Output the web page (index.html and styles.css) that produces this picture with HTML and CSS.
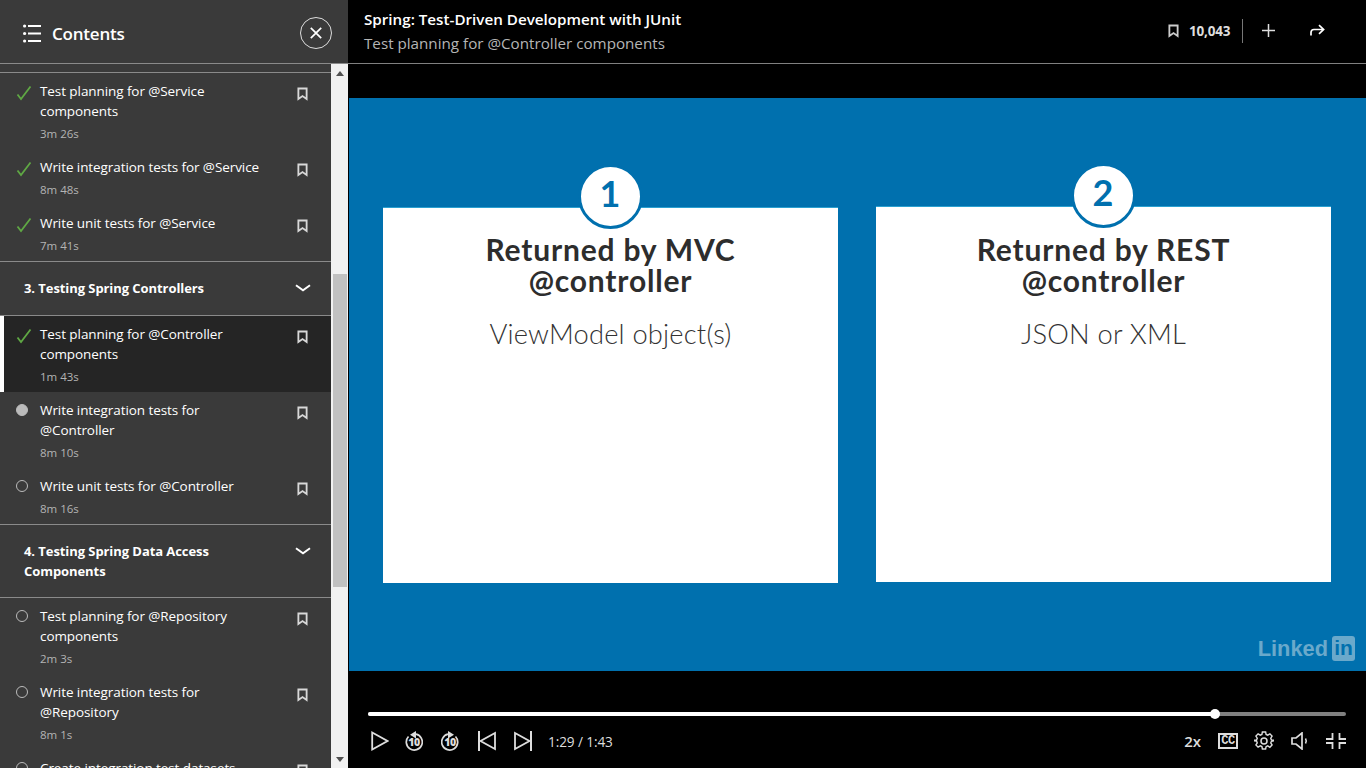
FILE: index.html
```html
<!DOCTYPE html>
<html lang="en">
<head>
<meta charset="utf-8">
<title>Spring: Test-Driven Development with JUnit</title>
<link rel="stylesheet" href="styles.css">
</head>
<body>
<svg class="defs" width="0" height="0" aria-hidden="true">
  <symbol id="bm" viewBox="0 0 12 14"><path d="M1.500 1h9v11.500L6 9.200 1.500 12.500z" fill="none" stroke="currentColor" stroke-width="2"/></symbol>
  <symbol id="chk" viewBox="0 0 16 16"><path d="M1.500 9.500 5 14 14.500 1.500" fill="none" stroke="#5fa844" stroke-width="1.800"/></symbol>
  <symbol id="skip" viewBox="0 0 18 20"><path d="M11 3.200A8 8 0 1 1 3.500 5.500" fill="none" stroke="#ddd" stroke-width="1.700"/><path d="M11 0v7.500L5 3.700z" fill="#ddd"/></symbol>
</svg>
<div class="app">
  <aside class="side">
    <header class="side-head">
      <svg class="list-ic" width="18" height="19" viewBox="0 0 18 19"><g fill="#fff"><circle cx="1.600" cy="2" r="1.600"/><circle cx="1.600" cy="9.500" r="1.600"/><circle cx="1.600" cy="17" r="1.600"/><rect x="5" y="1" width="13" height="2"/><rect x="5" y="8.500" width="13" height="2"/><rect x="5" y="16" width="13" height="2"/></g></svg>
      <span class="side-title">Contents</span>
      <button class="close"><svg width="12" height="12" viewBox="0 0 12 12"><path d="M.8.8l10.400 10.400M11.200.8.8 11.200" stroke="#fff" stroke-width="1.700" fill="none"/></svg></button>
    </header>
    <div class="side-body">
      <div class="toc">
        <div class="stub"></div>
        <div class="row"><svg class="st"><use href="#chk"/></svg><div class="txt"><p class="name">Test planning for @Service components</p><p class="time">3m 26s</p></div><svg class="bm"><use href="#bm"/></svg></div>
        <div class="row"><svg class="st"><use href="#chk"/></svg><div class="txt"><p class="name">Write integration tests for @Service</p><p class="time">8m 48s</p></div><svg class="bm"><use href="#bm"/></svg></div>
        <div class="row last"><svg class="st"><use href="#chk"/></svg><div class="txt"><p class="name">Write unit tests for @Service</p><p class="time">7m 41s</p></div><svg class="bm"><use href="#bm"/></svg></div>
        <div class="sec"><span class="sec-name">3. Testing Spring Controllers</span><svg class="chev" width="16" height="8" viewBox="0 0 16 8"><path d="M1 1.200 8 6.200l7-5" fill="none" stroke="#fff" stroke-width="2"/></svg></div>
        <div class="row active"><svg class="st"><use href="#chk"/></svg><div class="txt"><p class="name">Test planning for @Controller components</p><p class="time">1m 43s</p></div><svg class="bm"><use href="#bm"/></svg></div>
        <div class="row"><span class="dot filled"></span><div class="txt"><p class="name">Write integration tests for @Controller</p><p class="time">8m 10s</p></div><svg class="bm"><use href="#bm"/></svg></div>
        <div class="row last"><span class="dot"></span><div class="txt"><p class="name">Write unit tests for @Controller</p><p class="time">8m 16s</p></div><svg class="bm"><use href="#bm"/></svg></div>
        <div class="sec"><span class="sec-name">4. Testing Spring Data Access Components</span><svg class="chev" width="16" height="8" viewBox="0 0 16 8"><path d="M1 1.200 8 6.200l7-5" fill="none" stroke="#fff" stroke-width="2"/></svg></div>
        <div class="row"><span class="dot"></span><div class="txt"><p class="name">Test planning for @Repository components</p><p class="time">2m 3s</p></div><svg class="bm"><use href="#bm"/></svg></div>
        <div class="row"><span class="dot"></span><div class="txt"><p class="name">Write integration tests for @Repository</p><p class="time">8m 1s</p></div><svg class="bm"><use href="#bm"/></svg></div>
        <div class="row"><span class="dot"></span><div class="txt"><p class="name">Create integration test datasets</p><p class="time">6m 2s</p></div><svg class="bm"><use href="#bm"/></svg></div>
      </div>
      <div class="sbar">
        <span class="arrow up"></span>
        <span class="sb-top"></span>
        <span class="thumb"></span>
        <span class="sb-bot"></span>
        <span class="arrow down"></span>
      </div>
    </div>
  </aside>
  <main class="main">
    <header class="top">
      <div class="titles">
        <div class="t1">Spring: Test-Driven Development with JUnit</div>
        <div class="t2">Test planning for @Controller components</div>
      </div>
      <div class="actions">
        <svg class="bm-top"><use href="#bm"/></svg>
        <span class="count">10,043</span>
        <span class="vr"></span>
        <svg class="plus" width="13" height="13" viewBox="0 0 13 13"><path d="M6.500 0v13M0 6.500h13" stroke="#ddd" stroke-width="1.500"/></svg>
        <svg class="share" width="15" height="12" viewBox="0 0 15 12"><path d="M1 11.500V8.500Q1 5.500 4 5.500H13M9 1.200l4.600 4.300L9 9.800" fill="none" stroke="#fff" stroke-width="1.700"/></svg>
      </div>
    </header>
    <section class="stage">
      <div class="slide">
        <div class="card">
          <span class="badge">1</span>
          <h2>Returned by MVC<br>@controller</h2>
          <p>ViewModel object(s)</p>
        </div>
        <div class="card second">
          <span class="badge">2</span>
          <h2>Returned by REST<br>@controller</h2>
          <p>JSON or XML</p>
        </div>
        <div class="li-logo"><span class="li-word">Linked</span><span class="li-box">in</span></div>
      </div>
    </section>
    <section class="player">
      <div class="track"><span class="played"></span><span class="knob"></span></div>
      <div class="ctrls">
        <svg class="ic play" width="18" height="20" viewBox="0 0 18 20"><path d="M1.200 1.500 16.500 10 1.200 18.500z" fill="none" stroke="#ddd" stroke-width="1.800"/></svg>
        <span class="rw back"><svg width="18" height="20"><use href="#skip"/></svg><b>10</b></span>
        <span class="rw fwd"><svg class="flip" width="18" height="20"><use href="#skip"/></svg><b>10</b></span>
        <svg class="ic prev" width="18" height="20" viewBox="0 0 18 20"><path d="M1 0v20" stroke="#ddd" stroke-width="2"/><path d="M17 2 2.500 10 17 18z" fill="none" stroke="#ddd" stroke-width="1.800"/></svg>
        <svg class="ic next" width="18" height="20" viewBox="0 0 18 20"><path d="M17 0v20" stroke="#ddd" stroke-width="2"/><path d="M1 2l14.500 8L1 18z" fill="none" stroke="#ddd" stroke-width="1.800"/></svg>
        <span class="clock">1:29 / 1:43</span>
        <span class="grow"></span>
        <span class="speed">2x</span>
        <span class="cc">CC</span>
        <svg class="gear" width="20" height="20" viewBox="0 0 20 20"><path d="M8.300 1h3.400l.5 2.600 1.700.8 2.300-1.400 2.300 2.400-1.400 2.200.7 1.700 2.600.5v.4l-2.600.6-.7 1.800 1.400 2.100-2.300 2.400-2.300-1.400-1.700.8-.5 2.400H8.300l-.5-2.500-1.700-.7L3.800 17 1.500 14.600l1.400-2.100-.7-1.800-2.600-.5v-.4l2.600-.5.7-1.700L1.500 5.400l2.300-2.400 2.300 1.400 1.700-.8z" fill="none" stroke="#ddd" stroke-width="1.500" transform="translate(.5 0) scale(.95)"/><circle cx="10" cy="10" r="3" fill="none" stroke="#ddd" stroke-width="1.500"/></svg>
        <svg class="vol" width="18" height="18" viewBox="0 0 18 18"><path d="M1 6h4l6-5v16l-6-5H1z" fill="none" stroke="#ddd" stroke-width="1.700"/><path d="M14.500 6.500q1.500 2.500 0 5" fill="none" stroke="#ddd" stroke-width="1.500"/></svg>
        <svg class="fs" width="20" height="16" viewBox="0 0 20 16"><path d="M6.500 0v6H0M13.500 0v6H20M6.500 16v-6H0M13.500 16v-6H20" fill="none" stroke="#ddd" stroke-width="1.800"/></svg>
      </div>
    </section>
  </main>
</div>
</body>
</html>
```
FILE: styles.css
```css
* { box-sizing: border-box; }
html, body { margin: 0; height: 100%; overflow: hidden; background: #000; }
body { font-family: "Open Sans", "Noto Sans", sans-serif; color: #fff; }
.defs { position: absolute; }
.app { display: flex; width: 1366px; height: 768px; }

.side { width: 348px; flex: none; background: #3a3a3a; display: flex; flex-direction: column; }
.side-head { height: 64px; flex: none; border-bottom: 1px solid #8a8a8a; display: flex; align-items: center; padding: 3px 16px 0 23px; }
.side-title { font-size: 17px; font-weight: 600; margin-left: 11px; letter-spacing: -.2px; flex: 1; }
.close { width: 32px; height: 32px; border: 1.500px solid #ddd; border-radius: 50%; background: none; padding: 0; display: flex; align-items: center; justify-content: center; }
.side-body { flex: 1; display: flex; min-height: 0; }
.toc { width: 331px; flex: none; overflow: hidden; }
.stub { height: 9px; border-bottom: 1px solid #8a8a8a; }
.row { display: flex; padding: 8px 0 5px 40px; position: relative; }
.row.last { border-bottom: 1px solid #8a8a8a; }
.row.active { background: #252525; box-shadow: inset 4px 0 0 #fff; }
.st { position: absolute; left: 16px; top: 12px; width: 16px; height: 16px; }
.dot { position: absolute; left: 16px; top: 12px; width: 12px; height: 12px; border: 1px solid #bbb; border-radius: 50%; }
.dot.filled { background: #bbb; }
.txt { width: 225px; flex: none; }
.name { margin: 0; font-size: 13.500px; line-height: 20px; letter-spacing: -.08px; color: #fff; }
.time { margin: 3px 0 0; font-size: 11.500px; line-height: 20px; color: #b4b4b4; }
.bm { width: 11px; height: 14px; color: #d8d8d8; position: absolute; left: 297px; top: 14px; }
.sec { min-height: 54px; padding: 16px 20px 16px 24px; display: flex; justify-content: space-between; align-items: flex-start; border-bottom: 1px solid #8a8a8a; }
.sec-name { width: 215px; font-size: 13px; font-weight: 700; line-height: 20px; letter-spacing: -.07px; }
.chev { margin-top: 6px; }

.sbar { width: 17px; flex: none; background: #f1f1f1; display: flex; flex-direction: column; align-items: center; }
.arrow { width: 0; height: 0; border-left: 4px solid transparent; border-right: 4px solid transparent; flex: none; }
.arrow.up { border-bottom: 5px solid #505050; margin-top: 7px; }
.arrow.down { border-top: 5px solid #505050; margin-bottom: 6px; }
.sb-top { height: 198px; }
.thumb { height: 313px; width: 14px; background: #c1c1c1; margin-left: 1px; flex: none; }
.sb-bot { flex: 1; }

.main { flex: 1; min-width: 0; display: flex; flex-direction: column; background: #000; }
.top { height: 64px; flex: none; border-bottom: 1px solid #808080; display: flex; justify-content: space-between; padding: 9px 41px 0 16px; }
.t1 { font-size: 15.200px; font-weight: 600; line-height: 20px; }
.t2 { font-size: 15.200px; line-height: 20px; margin-top: 4px; color: #b5b5b5; }
.actions { display: flex; align-items: center; height: 44px; margin-top: -9px; padding-top: 17px; }
.bm-top { width: 11px; height: 14px; color: #ccc; }
.count { font-size: 13.500px; font-weight: 700; color: #ddd; margin-left: 10px; letter-spacing: -.2px; width: 41px; white-space: nowrap; }
.vr { width: 1px; height: 24px; background: #777; margin-left: 12px; }
.plus { margin-left: 19px; }
.share { margin-left: 35px; position: relative; top: -1px; }

.stage { height: 607px; flex: none; padding: 34px 0 0 1px; }
.slide { height: 573px; background: #0070ae; display: flex; padding: 109px 0 0 34px; gap: 38px; position: relative; }
.card { width: 455px; height: 376px; background: #fff; border-top: 1px solid #2aa0d0; display: flex; flex-direction: column; align-items: center; position: relative; font-family: "Lato", sans-serif; color: #2d2d2d; text-align: center; }
.card.second { margin-top: -1px; }
.card.second h2 { margin-top: 27px; }
.badge { position: absolute; left: 50%; top: -44px; margin-left: -33px; width: 65px; height: 65px; border-radius: 50%; background: #fff; border: 3px solid #0070ae; font-size: 36px; font-weight: 700; color: #0070ae; line-height: 53px; }
h2 { margin: 26px 0 0; font-size: 30px; line-height: 31px; font-weight: 700; letter-spacing: .8px; }
.card p { margin: 20px 0 0; font-size: 27.300px; line-height: 36px; font-weight: 300; color: #333; letter-spacing: .2px; }
.li-logo { position: absolute; right: 11px; bottom: 10px; display: flex; align-items: center; gap: 4px; color: #6aa9cb; font-family: "Liberation Sans", sans-serif; font-weight: 700; font-size: 21.800px; line-height: 24px; }
.li-box { background: #6aa9cb; color: #0070ae; width: 23px; height: 25px; border-radius: 3px; text-align: center; font-size: 21px; }

.player { flex: 1; padding: 0 20px; display: flex; flex-direction: column; }
.track { height: 4px; margin-top: 41px; background: #808080; border-radius: 2px; position: relative; flex: none; }
.played { position: absolute; left: 0; top: 0; height: 4px; width: 847px; background: #fff; border-radius: 2px; }
.knob { position: absolute; left: 842px; top: -3px; width: 10px; height: 10px; border-radius: 50%; background: #fff; }
.ctrls { display: flex; align-items: center; margin-top: 12px; height: 26px; color: #ddd; }
.play { margin-left: 3px; }
.rw { position: relative; width: 18px; height: 20px; display: block; margin-left: 16px; }
.rw.fwd { margin-left: 18px; }
.rw svg { display: block; }
.flip { transform: scaleX(-1); }
.rw b { position: absolute; left: 0; right: 0; top: 5px; font-size: 10.500px; line-height: 12px; text-align: center; font-weight: 800; letter-spacing: -.5px; color: #ddd; }
.prev { margin-left: 19px; }
.next { margin-left: 18px; }
.clock { font-size: 13.600px; font-weight: 400; margin-left: 16px; color: #ddd; letter-spacing: -.1px; }
.grow { flex: 1; }
.speed { font-size: 15px; font-weight: 600; color: #ddd; }
.cc { width: 20px; height: 16px; border: 2px solid #ddd; margin-left: 17px; font-family: "Liberation Mono", monospace; font-size: 12px; font-weight: 700; line-height: 12px; text-align: center; letter-spacing: -.5px; }
.gear { margin-left: 16px; }
.vol { margin-left: 17px; }
.fs { margin-left: 17px; }
```
